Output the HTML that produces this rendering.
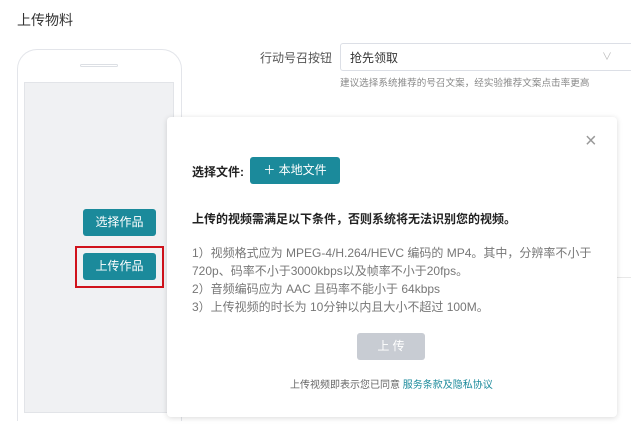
<!DOCTYPE html>
<html><head><meta charset="utf-8"><style>
*{margin:0;padding:0;box-sizing:border-box}
html,body{width:631px;height:434px;overflow:hidden}
body{background:#fff;position:relative;font-family:"Liberation Sans","Noto Sans CJK SC",sans-serif;color:#333}
.a{position:absolute;white-space:nowrap}
.btn{position:absolute;background:#1b8a9b;color:#fff;border-radius:3px;font-size:12px;text-align:center}
</style></head><body>
<div class="a" style="left:17px;top:10px;font-size:14px;color:#333">上传物料</div>
<div class="a" style="left:17px;top:49px;width:165px;height:372px;border:1px solid #e3e5ea;border-bottom:none;border-radius:20px 20px 0 0"></div>
<div class="a" style="left:80px;top:64px;width:38px;height:3px;border:1px solid #dcdfe4;border-radius:2px"></div>
<div class="a" style="left:24px;top:82px;width:150px;height:331px;background:#f0f1f3;border:1px solid #e2e4e8"></div>
<div class="btn" style="left:83px;top:209px;width:73px;height:27px;line-height:27px">选择作品</div>
<div class="a" style="left:75px;top:246px;width:89px;height:42px;border:2px solid #d0121b"></div>
<div class="btn" style="left:83px;top:253px;width:73px;height:27px;line-height:27px">上传作品</div>
<div class="a" style="left:260px;top:49px;font-size:12px;color:#555">行动号召按钮</div>
<div class="a" style="left:340px;top:43px;width:300px;height:28px;border:1px solid #dcdfe6;border-radius:3px"></div>
<div class="a" style="left:350px;top:49px;font-size:12px;color:#333">抢先领取</div>
<div class="a" style="left:602px;top:48px;font-size:10px;color:#bbb">∨</div>
<div class="a" style="left:340px;top:75px;font-size:9.6px;color:#888">建议选择系统推荐的号召文案，经实验推荐文案点击率更高</div>
<div class="a" style="left:617px;top:277px;width:14px;height:1px;background:#e8e8e8"></div>
<div class="a" style="left:167px;top:117px;width:450px;height:300px;background:#fff;border-radius:4px;box-shadow:0 1px 6px rgba(0,0,0,.15)"></div>
<div class="a" style="left:585px;top:130px;font-size:20px;color:#999;font-weight:300">×</div>
<div class="a" style="left:192px;top:163px;font-size:12px;font-weight:bold;color:#222">选择文件:</div>
<div class="btn" style="left:250px;top:157px;width:90px;height:27px;line-height:27px">＋ 本地文件</div>
<div class="a" style="left:192px;top:210px;font-size:12px;font-weight:bold;color:#222">上传的视频需满足以下条件，否则系统将无法识别您的视频。</div>
<div class="a" style="left:192px;top:244px;font-size:12px;color:#777;line-height:18px">1）视频格式应为 MPEG-4/H.264/HEVC 编码的 MP4。其中，分辨率不小于<br>720p、码率不小于3000kbps以及帧率不小于20fps。<br>2）音频编码应为 AAC 且码率不能小于 64kbps<br>3）上传视频的时长为 10分钟以内且大小不超过 100M。</div>
<div class="a" style="left:357px;top:333px;width:68px;height:27px;background:#c8ccd3;border-radius:3px;color:#fff;font-size:12px;text-align:center;line-height:27px">上 传</div>
<div class="a" style="left:290px;top:376px;font-size:10px;color:#666">上传视频即表示您已同意 <span style="color:#1b8a9b">服务条款及隐私协议</span></div>
</body></html>
